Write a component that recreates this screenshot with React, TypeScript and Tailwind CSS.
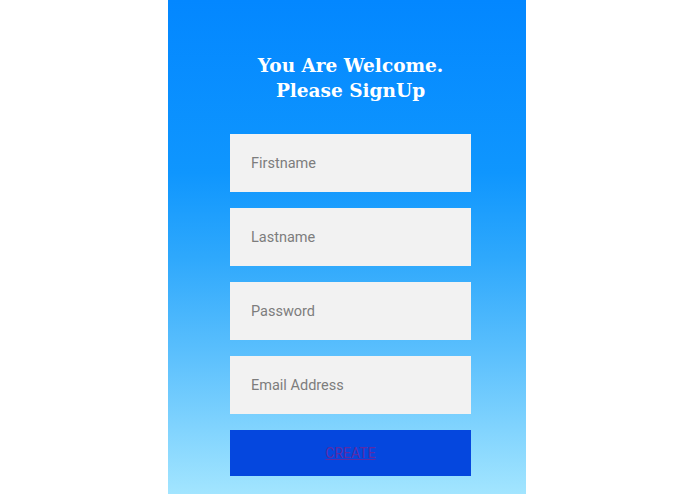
import React from 'react';

const fields = ['Firstname', 'Lastname', 'Password', 'Email Address'];

export default function App() {
  return (
    <div className="flex h-[494px] w-full bg-white">
      <div className="ml-[168px] flex h-full w-[358px] flex-col bg-[linear-gradient(180deg,#0387ff_0%,#0f96fe_35%,#2ea8fc_52%,#5cc0fd_72%,#a2e5ff_100%)] pl-[62px] pr-[55px] pt-[53px]">
        <h1 className="text-center font-['DejaVu_Serif',serif] text-[18.5px] font-bold leading-[25px] text-white">
          You Are Welcome.
          <br />
          Please SignUp
        </h1>
        <form className="mt-[31px] flex flex-col gap-4" onSubmit={(e) => e.preventDefault()}>
          {fields.map((f) => (
            <input
              key={f}
              type={f === 'Password' ? 'password' : 'text'}
              placeholder={f}
              className="h-[58px] w-full bg-[#f2f2f2] px-[21px] font-['Roboto',sans-serif] text-[14.5px] text-[#333] outline-none placeholder:text-[#7d7d7d]"
            />
          ))}
          <button
            type="submit"
            className="flex h-[46px] w-full items-center justify-center bg-[#0547de]"
          >
            <span className="font-['Roboto',sans-serif] text-[14px] text-[#5c2ba6] underline">CREATE</span>
          </button>
        </form>
      </div>
    </div>
  );
}
